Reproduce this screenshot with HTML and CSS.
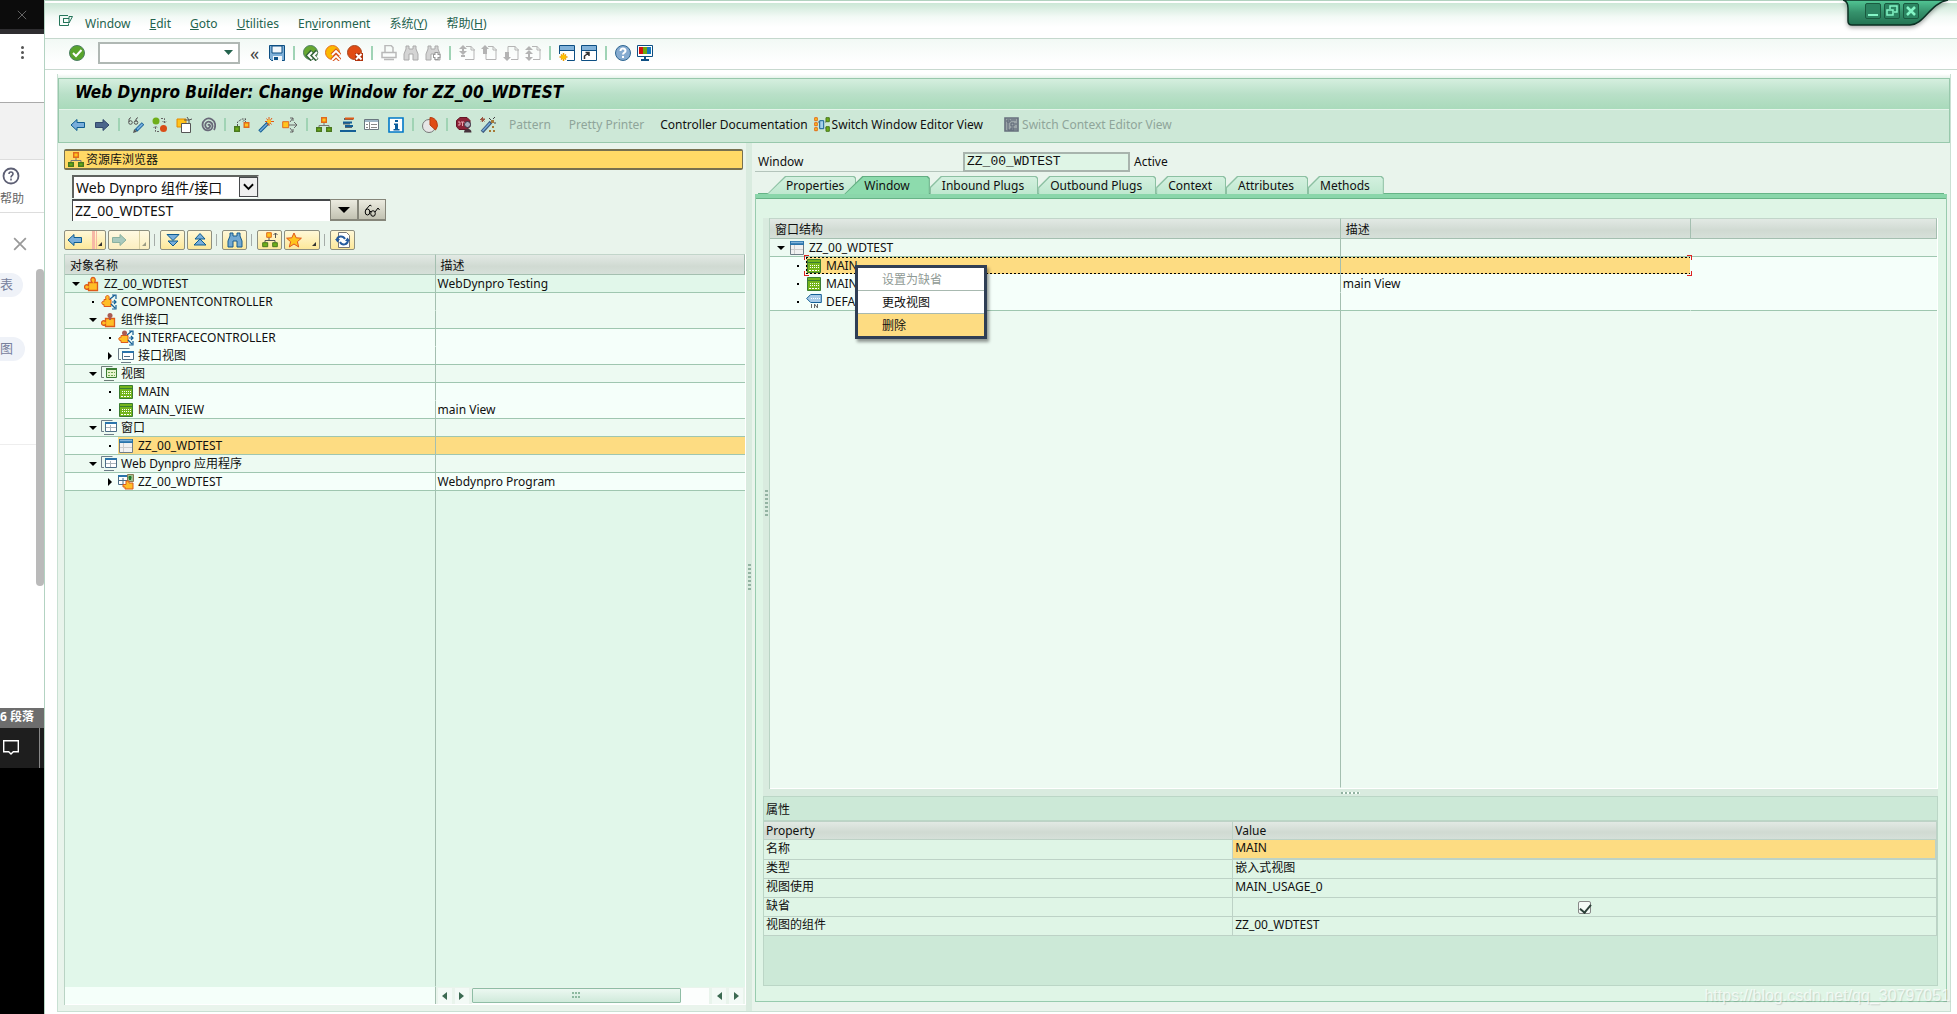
FILE: index.html
```html
<!DOCTYPE html>
<html lang="zh-CN">
<head>
<meta charset="utf-8">
<title>Web Dynpro Builder</title>
<link rel="stylesheet" href="styles.css">
</head>
<body>
<svg class="defs" aria-hidden="true">
  <symbol id="exit" viewBox="0 0 16 16"><path d="M10 2.500H1.500v10h9v-2M5 5.500h6M5 9.500h6M5.500 5v5M11 3.500h3.500L11 10z" fill="none" stroke="#24755a"/></symbol>
  <symbol id="ok" viewBox="0 0 16 16"><circle cx="8" cy="8" r="7.500" fill="#58a42c" stroke="#4d7f63"/><path d="M4 8l3 3 5.500-6" fill="none" stroke="#fff" stroke-width="2"/></symbol>
  <symbol id="save" viewBox="0 0 16 16"><path d="M.5.500h15v15h-13l-2-2z" fill="#7fb0d8" stroke="#0d4f83"/><path d="M3 1h10v7H3z" fill="#f2f7fb" stroke="#0d4f83"/><path d="M4 11h9v5H4z" fill="#f2f7fb"/><path d="M5 12h4v3H5z" fill="#0d4f83"/></symbol>
  <symbol id="back" viewBox="0 0 16 16"><circle cx="7.500" cy="7.500" r="7" fill="#66a830" stroke="#4d7f63"/><path d="M9 6l-4 4.500L9 15M14 6l-4 4.500 4 4.500" fill="none" stroke="#33633a" stroke-width="4"/><path d="M9 7l-3.500 3.500L9 14M14 7l-3.500 3.500L14 14" fill="none" stroke="#fff" stroke-width="2"/></symbol>
  <symbol id="up" viewBox="0 0 16 16"><circle cx="7.500" cy="7.500" r="7" fill="#fbb900" stroke="#e66f20"/><path d="M7 10l4-4 4 4M7 15l4-4 4 4" fill="none" stroke="#d9541e" stroke-width="4"/><path d="M7 10l4-4 4 4M7 15l4-4 4 4" fill="none" stroke="#fff" stroke-width="1.800"/></symbol>
  <symbol id="stop" viewBox="0 0 16 16"><circle cx="7.500" cy="7.500" r="7" fill="#e14b13" stroke="#a54a22"/><path d="M8 8h8v8H8z" fill="#b0320c"/><path d="M9 9l5.500 5.500M14.500 9L9 14.500" stroke="#fff" stroke-width="2"/></symbol>
  <symbol id="print" viewBox="0 0 16 16"><path d="M4 7V.5h6l2 2V7M1 7.500h14v5H1zM3 14.500h10" fill="none" stroke="#b9b9b9" stroke-width="1.500"/></symbol>
  <symbol id="find" viewBox="0 0 16 16"><path d="M3 1h3v3h4V1h3v3l2 5v6h-5V9H6v6H1V9l2-5z" fill="#d4d4d4" stroke="#aaa"/></symbol>
  <symbol id="bino" viewBox="0 0 16 16"><path d="M3 1h3v3h4V1h3v3l2 5v6h-5V9H6v6H1V9l2-5z" fill="#72a8d2" stroke="#155b8d"/></symbol>
  <symbol id="findn" viewBox="0 0 16 16"><path d="M3 1h3v3h4V1h3v3l2 5v6h-5V9H6v6H1V9l2-5z" fill="#d4d4d4" stroke="#aaa"/><path d="M11.500 7v8M8 11h7.500" stroke="#999" stroke-width="4"/><path d="M11.500 8v6M9 11h5.500" stroke="#fff" stroke-width="2"/></symbol>
  <symbol id="pgfirst" viewBox="0 0 16 16"><path d="M7 1.500h5l3 3v10H6M12 1v4h4" fill="none" stroke="#b5b5b5"/><path d="M4 0l4 4H5v2h3l-4 4-4-4h3V4H0zM2 10h4v2H2z" fill="#b3b3b3"/></symbol>
  <symbol id="pgup" viewBox="0 0 16 16"><path d="M7 1.500h5l3 3v10H5V9M12 1v4h4" fill="none" stroke="#b5b5b5"/><path d="M4 0l4 4H6v5H2V4H0z" fill="#b3b3b3"/></symbol>
  <symbol id="pgdn" viewBox="0 0 16 16"><path d="M5 8V1.500h7l3 3v10H8M12 1v4h4" fill="none" stroke="#b5b5b5"/><path d="M4 16l4-4H6V7H2v5H0z" fill="#b3b3b3"/></symbol>
  <symbol id="pglast" viewBox="0 0 16 16"><path d="M7 1.500h5l3 3v10H8M12 1v4h4" fill="none" stroke="#b5b5b5"/><path d="M4 1l4 4H0zM4 16l4-4H5V9h3L4 5 0 9h3v3H0z" fill="#b3b3b3"/></symbol>
  <symbol id="newwin" viewBox="0 0 16 16"><path d="M.5.500h15v15H8M.5 9V.500" fill="#fff" stroke="#0d4f83"/><path d="M1 1h14v4H1z" fill="#82b3da"/><path d="M.5 5.500h15" stroke="#0d4f83"/><path d="M4.500 8v8M.5 12h8M2 9.500l5 5M7 9.500l-5 5" stroke="#ee9a00" stroke-width="1.500"/><circle cx="4.500" cy="12" r="2.200" fill="#ffc400"/></symbol>
  <symbol id="shortcut" viewBox="0 0 16 16"><path d="M.5.500h15v15H.5z" fill="#fff" stroke="#0d4f83"/><path d="M1 1h14v4H1z" fill="#82b3da"/><path d="M.5 5.500h15" stroke="#0d4f83"/><path d="M3.500 14V11l4-3M4.500 7.500h3.500v3.500" fill="none" stroke="#333" stroke-width="1.500"/></symbol>
  <symbol id="help" viewBox="0 0 16 16"><circle cx="8" cy="8" r="7.500" fill="#86abd0" stroke="#2f6793"/><path d="M5.500 6c0-3.500 5-3 5 0 0 1.500-2.500 1.500-2.500 3.500M8 11v2" fill="none" stroke="#fff" stroke-width="2"/></symbol>
  <symbol id="monitor" viewBox="0 0 16 16"><path d="M.5.500h15v11H.5z" fill="#fff" stroke="#0d4f83"/><path d="M2 2h4v7H2z" fill="#d3120c"/><path d="M6 2h4v7H6z" fill="#6ea80c"/><path d="M10 2h4v7h-4z" fill="#1479bd"/><path d="M7 12h2v2h3v2H4v-2h3z" fill="#0d4f83"/></symbol>
  <symbol id="left" viewBox="0 0 16 16"><path d="M1 8l6-5.500v3h7.500v5H7v3z" fill="#78aedb" stroke="#0e5c91"/></symbol>
  <symbol id="leftgrey" viewBox="0 0 16 16"><path d="M15 8L9 2.500v3H1.500v5H9v3z" fill="#a9c9bd" stroke="#8ab1a0"/></symbol>
  <symbol id="right" viewBox="0 0 16 16"><path d="M15 8L9 2.500v3H1.500v5H9v3z" fill="#4a668b" stroke="#33486c"/></symbol>
  <symbol id="editgl" viewBox="0 0 16 16"><path d="M1 5V2l2-1.500M8 5V2l2-1.500" fill="none" stroke="#555"/><circle cx="2.500" cy="5.500" r="1.800" fill="none" stroke="#555"/><circle cx="8" cy="5.500" r="1.800" fill="none" stroke="#555"/><path d="M15 6.500L8 13.500" stroke="#145f96" stroke-width="3.500"/><path d="M14.500 7L9 12.500" stroke="#74aede" stroke-width="1.800"/><path d="M5 16l1.200-4 2.800 2.800z" fill="#555"/></symbol>
  <symbol id="swap" viewBox="0 0 16 16"><circle cx="4" cy="4" r="3.500" fill="#6eae18"/><circle cx="11.500" cy="11.500" r="3.500" fill="#d94d17"/><path d="M9 1.500h3.500V6M10.500 4l2 2 2-2M7 14.500H3.500V9M1.500 11l2-2 2 2" fill="none" stroke="#666" stroke-dasharray="2 1"/></symbol>
  <symbol id="copy" viewBox="0 0 16 16"><path d="M1 2h9v8H1z" fill="#ffc41d" stroke="#e48800"/><path d="M5.500 6.500h9v9h-9z" fill="#fff" stroke="#555"/><path d="M8 3h5v3M11 0l2 3 3-1" fill="none" stroke="#555"/></symbol>
  <symbol id="spiral" viewBox="0 0 16 16"><path d="M8 8.500c1-2 3 0 1.500 2C7 13 4 9 6 6c2.500-3 7-.5 6.500 3.500C12 14 5 15 3 10 1 4 7-.5 12 2.500c3.500 2 4 6.500 2 10.500" fill="none" stroke="#686878" stroke-width="1.800"/></symbol>
  <symbol id="branch" viewBox="0 0 16 16"><path d="M3.500 9V5L8 2h3.500v3M9 4.500l3-3" fill="none" stroke="#555" stroke-dasharray="2 1"/><path d="M.7 9.700h4.600v4.600H.7z" fill="#6eae18" stroke="#49781f" stroke-width="1.400"/><path d="M10.200 5.700h4.600v4.600h-4.600z" fill="#ffc41d" stroke="#e06a1c" stroke-width="1.400"/></symbol>
  <symbol id="wand" viewBox="0 0 16 16"><path d="M10 6l-8.500 8.500" stroke="#145f96" stroke-width="3.500"/><path d="M9 7l-7 7" stroke="#74aede" stroke-width="1.500"/><path d="M11 0v9M7 4.500h9M8.500 1.500l5 6M14 1L9 8" stroke="#e05b16"/><circle cx="11" cy="4.500" r="2" fill="#ffc41d"/></symbol>
  <symbol id="navi" viewBox="0 0 16 16"><path d="M.7 4.700h6v6h-6z" fill="#ffc41d" stroke="#e06a1c"/><path d="M7 8h8M12 5l3 3-3 3M8 5l3-4M8 1h3v3M8 11l3 4M8 15h3v-3" fill="none" stroke="#666"/></symbol>
  <symbol id="tree" viewBox="0 0 16 16"><path d="M8 5v4M3 11V8.500h10V11" fill="none" stroke="#777"/><path d="M5.700.7h4.600v4.600H5.700z" fill="#ffc41d" stroke="#e06a1c" stroke-width="1.400"/><path d="M.7 10.700h4.600v3.600H.7zM10.700 10.700h4.600v3.600h-4.600z" fill="#6eae18" stroke="#49781f" stroke-width="1.400"/></symbol>
  <symbol id="stack" viewBox="0 0 16 16"><path d="M4 2h9M3 6.500h7M5 10h7" stroke="#5e666c" stroke-width="2.200"/><path d="M5 1.500h9" stroke="#e05b16" stroke-width="2"/><path d="M3 5.500h9M5 9h8M0 14h16" stroke="#145f96" stroke-width="2"/></symbol>
  <symbol id="list" viewBox="0 0 16 16"><path d="M.5 2.500h14v10H.5z" fill="#fff" stroke="#6b7780"/><path d="M1 3h13v2H1z" fill="#9fb6c6"/><path d="M5.500 5v8M2 7.500h2M2 10.500h2M7 7.500h6M7 10.500h6" stroke="#888"/></symbol>
  <symbol id="info" viewBox="0 0 16 16"><path d="M1 1h14v14H1z" fill="#fff" stroke="#0078c8" stroke-width="1.600"/><path d="M7 3h3v2H7zM6 6.500h4V12h1.500v1.500h-6V12H7V8H6z" fill="#0c5d9c"/></symbol>
  <symbol id="pie" viewBox="0 0 16 16"><circle cx="7" cy="9" r="6.500" fill="#e6e6e6" stroke="#777"/><path d="M8 8V.5A7.500 7.500 0 0 1 13.500 13z" fill="#e04c15" stroke="#b73c10"/></symbol>
  <symbol id="stopuser" viewBox="0 0 16 16"><path d="M4 .500h7l3 3v6l-3 3H3l-2.500-3v-6z" fill="#8c2237" stroke="#651526"/><path d="M2 5h2v3H2M5 5h3M6.500 5v4M9 5v4" stroke="#e9a8b2" fill="none"/><circle cx="11.500" cy="7.500" r="3" fill="#aab" stroke="#334"/><path d="M8 15.500c0-5 7.500-5 7.500 0z" fill="#46323c"/></symbol>
  <symbol id="wand2" viewBox="0 0 16 16"><path d="M11 5l-9 10" stroke="#3f5c80" stroke-width="3.500"/><path d="M10 6l-7.500 8" stroke="#74aede" stroke-width="1.300"/><path d="M2.500 0v5M0 2.500h5M1 1l3.500 3.500M4.500 1L1 4.500" stroke="#9b5540"/><path d="M11 3h3v3h-3zM12 9h2v2h-2zM9 13h2v2H9zM13 13h2v2h-2z" fill="#a67a36"/><path d="M9 1l2 2M15 0l-2 2M14 6h2" stroke="#444"/></symbol>
  <symbol id="swin" viewBox="0 0 16 16"><path d="M.7.700h2.600v3H.7zM.7 5.700h2.600v3H.7zM.7 10.700h2.600v3H.7z" fill="#ffc41d" stroke="#e06a1c"/><path d="M5.700 3.700h4v8h-4z" fill="#a6d0ed" stroke="#145f96"/><path d="M12 .700h3.300v4H12zM12 9.700h3.300v4.600H12z" fill="#6eae18" stroke="#49781f"/><path d="M4 5h1M11 5h1M11 11h1" stroke="#666"/></symbol>
  <symbol id="sctx" viewBox="0 0 16 16"><path d="M1 1h13v13H1z" fill="#9ba5a8" stroke="#67707d" stroke-width="1.600"/><path d="M3 3h3v2H3zM7 6h3v3H7zM7 11h3v2H7zM4 5v8h3M7 3h5M11 7h2M11 12h2" fill="none" stroke="#5a6474"/></symbol>
  <symbol id="dblup" viewBox="0 0 16 16"><path d="M8 1.500L13 7H3zM8 7l6 6H2z" fill="#78aedb" stroke="#0e5c91"/></symbol>
  <symbol id="dbldn" viewBox="0 0 16 16"><path d="M8 14l5-5H3zM8 8.500l6-6H2z" fill="#78aedb" stroke="#0e5c91"/></symbol>
  <symbol id="treeup" viewBox="0 0 16 16"><path d="M7 5v4M3 11V8.500h10V11M13.500 6V1M11.500 3l2-2 2 2" fill="none" stroke="#555"/><path d="M4.700.7h4.600v4.600H4.700z" fill="#ffc41d" stroke="#e06a1c"/><path d="M.7 10.700h5v4h-5zM10.700 10.700h4.600v4h-4.600z" fill="#6eae18" stroke="#49781f"/></symbol>
  <symbol id="star" viewBox="0 0 16 16"><path d="M8 1l2.200 4.800 5.200.4-4 3.500 1.300 5.300L8 12l-4.700 3 1.300-5.300-4-3.500 5.200-.4z" fill="#ffc41d" stroke="#e0561c"/></symbol>
  <symbol id="refresh" viewBox="0 0 16 16"><path d="M3.500.500h8l3 3v12h-11z" fill="#fff" stroke="#777"/><path d="M2 8c0-4 6-5 8-1M13 8c0 5-6 6-8 2" fill="none" stroke="#255b9f" stroke-width="2"/><path d="M0 7h5l-2.500 3.500zM15 9h-5l2.500-3.500z" fill="#255b9f"/></symbol>
  <symbol id="glasses" viewBox="0 0 16 16"><ellipse cx="3.500" cy="10" rx="2.300" ry="3" fill="none" stroke="#000"/><ellipse cx="9" cy="11.500" rx="2.300" ry="2.800" fill="none" stroke="#000"/><path d="M2 7.500l4-4.500 1.500 1M6 9.500h1.500M11 10l3-4 1.500 2" fill="none" stroke="#000"/></symbol>
  <symbol id="puzzle" viewBox="0 0 16 16"><path d="M4.500 14.500v-2C3 14 .5 13 .5 11S3 8 4.500 9.500v-3H8C6 4 7 1.500 9 1.500S12 4 10.500 6.500h3v8z" fill="#ffbe26" stroke="#dd5b1a" stroke-width="1.300"/></symbol>
  <symbol id="puzzle2" viewBox="0 0 16 16"><path d="M4.500 14.500v-2C3 14 .5 13 .5 11S3 8 4.500 9.500v-3h9v8z" fill="#ffbe26" stroke="#dd5b1a" stroke-width="1.300"/><circle cx="9" cy="3.500" r="2.500" fill="#a95b52"/><path d="M8 5h2v3H8z" fill="#a95b52"/></symbol>
  <symbol id="pctrl" viewBox="0 0 16 16"><path d="M3 12.500v-2C1 11 .5 9 1 8s1.500-.5 2-.5v-2h2C4 3 5 1.500 6.500 1.500S8.500 3 8 5.500h2v7z" fill="#ffbe26" stroke="#dd5b1a"/><path d="M9 5l5-4M11 1h4v4M11 8h4M13 6l2 2-2 2M10 10l4 4M15 11v4h-4" fill="none" stroke="#145f96" stroke-width="1.200"/></symbol>
  <symbol id="pctrl2" viewBox="0 0 16 16"><path d="M3 12.500v-2C1 11 .5 9 1 8s1.500-.5 2-.5v-2h7v7z" fill="#ffbe26" stroke="#dd5b1a"/><circle cx="6.500" cy="3" r="2.500" fill="#a95b52"/><path d="M9 5l5-4M11 1h4v4M11 8h4M13 6l2 2-2 2M10 10l4 4M15 11v4h-4" fill="none" stroke="#145f96" stroke-width="1.200"/></symbol>
  <symbol id="wins" viewBox="0 0 16 16"><path d="M3 11.500H.5v-11h11M3 14.500h10" fill="none" stroke="#6d7d88"/><path d="M4.500 3.500h11v8h-11z" fill="#fff" stroke="#4c6d86"/><path d="M4 3h12v2H4z" fill="#2a74ab"/><path d="M6 8.500h6" stroke="#4c6d86"/></symbol>
  <symbol id="winsg" viewBox="0 0 16 16"><path d="M3 11.500H.5v-11h11M3 14.500h10" fill="none" stroke="#6d7d78"/><path d="M5.500 2.500h10v9h-10z" fill="#e5f3cf" stroke="#3a7d33"/><path d="M5 2h11v2H5z" fill="#3a7d33"/><path d="M7 6.500h7M7 9.500h7" stroke="#70a850" stroke-dasharray="2 1"/></symbol>
  <symbol id="winst" viewBox="0 0 16 16"><path d="M3 11.500H.5v-11h11M3 14.500h10" fill="none" stroke="#6d7d88"/><path d="M4.500 2.500h11v9h-11z" fill="#fff" stroke="#4c6d86"/><path d="M5 7.500h10M9.500 5v6" stroke="#a9b4bb"/><path d="M4 2h12v2H4z" fill="#2a74ab"/></symbol>
  <symbol id="view" viewBox="0 0 16 16"><path d="M1.500 1.500h13v13h-13z" fill="#74b51c" stroke="#3a7d33"/><path d="M2 4.500h12" stroke="#3a7d33"/><path d="M4 7.500h9M4 9.500h9" stroke="#fff" stroke-dasharray="1 1"/><path d="M3 12.500h10" stroke="#fff" stroke-dasharray="2 1"/></symbol>
  <symbol id="win" viewBox="0 0 16 16"><path d="M1.500 1.500h13v13h-13z" fill="#f1f1f1" stroke="#6f7d86"/><path d="M1 1h14v4H1z" fill="#2a74ab"/><path d="M2 2.500h12" stroke="#82b3da" stroke-width="1.500"/><path d="M5.500 5v9M2 9.500h12" stroke="#ccc"/></symbol>
  <symbol id="app" viewBox="0 0 16 16"><path d="M.5 1.500h9v9h-9zM1 6.500h9M5 4v7" fill="#fff" stroke="#4c6d86"/><path d="M0 1h10v2H0z" fill="#2a74ab"/><path d="M9.500.500h6v7h-6z" fill="#9fc08f" stroke="#8a7a55"/><path d="M12 2v4M10.500 3.500h3" stroke="#1d7a2c" stroke-width="2"/><path d="M7 15v-2H5v-2.500h3V7h3v2h4v6z" fill="#ffbe26" stroke="#dd5b1a"/></symbol>
  <symbol id="plug" viewBox="0 0 16 16"><path d="M.7 4.500l4-4h10.600v8H4.700z" fill="#a9cbe8" stroke="#145f96"/><path d="M5 4.500h9" stroke="#fff" stroke-dasharray="1 1"/><path d="M5.500 10v4M8.500 14v-4l3 4v-4" fill="none" stroke="#666"/></symbol>
</svg>

<div class="screen">
  <aside class="strip">
    <div class="strip-top"><svg viewBox="0 0 12 12"><path d="M1 1l10 10M11 1L1 11" stroke="#777" fill="none"/></svg></div>
    <div class="strip-menu"><span></span><span></span><span></span></div>
    <div class="strip-avatar"></div>
    <div class="strip-help">
      <svg viewBox="0 0 18 18"><circle cx="9" cy="9" r="7.500" fill="none" stroke="#5d5f74" stroke-width="1.800"/><path d="M7 7c0-3 4-2.500 4 0 0 1.500-2 1.300-2 3.500M9 11.500v2" fill="none" stroke="#5d5f74" stroke-width="1.600"/></svg>
      <span>帮助</span>
    </div>
    <div class="strip-body">
      <svg class="close" viewBox="0 0 12 12"><path d="M1 1l10 10M11 1L1 11" stroke="#999" stroke-width="1.500" fill="none"/></svg>
      <span class="pill">表</span>
      <span class="pill second">图</span>
      <i class="thumb"></i>
    </div>
    <div class="strip-count">6 段落</div>
    <div class="strip-note"><svg viewBox="0 0 16 16"><path d="M.7 1.700h14.600v11h-5L8 15l-2.300-2.300h-5z" fill="none" stroke="#fff" stroke-width="1.400"/></svg></div>
    <div class="strip-rest"></div>
  </aside>

  <main class="app">
    <nav class="menubar">
      <svg class="ic"><use href="#exit"/></svg>
      <a href="#">Window</a><a href="#"><u>E</u>dit</a><a href="#"><u>G</u>oto</a><a href="#"><u>U</u>tilities</a><a href="#">En<u>v</u>ironment</a><a href="#">系统(<u>Y</u>)</a><a href="#">帮助(<u>H</u>)</a>
    </nav>
    <div class="stdbar">
      <button class="tb" aria-label="Enter"><svg class="ic"><use href="#ok"/></svg></button>
      <label class="command"><input type="text" aria-label="Command"><svg viewBox="0 0 9 5"><path d="M0 0h9L4.500 5z" fill="#24634e"/></svg></label>
      <span class="chev">«</span>
      <button class="tb" aria-label="Save"><svg class="ic"><use href="#save"/></svg></button>
      <i class="sep"></i>
      <button class="tb" aria-label="Back"><svg class="ic"><use href="#back"/></svg></button>
      <button class="tb" aria-label="Exit"><svg class="ic"><use href="#up"/></svg></button>
      <button class="tb" aria-label="Cancel"><svg class="ic"><use href="#stop"/></svg></button>
      <i class="sep"></i>
      <button class="tb" aria-label="Print"><svg class="ic"><use href="#print"/></svg></button>
      <button class="tb" aria-label="Find"><svg class="ic"><use href="#find"/></svg></button>
      <button class="tb" aria-label="Find next"><svg class="ic"><use href="#findn"/></svg></button>
      <i class="sep"></i>
      <button class="tb" aria-label="First page"><svg class="ic"><use href="#pgfirst"/></svg></button>
      <button class="tb" aria-label="Previous page"><svg class="ic"><use href="#pgup"/></svg></button>
      <button class="tb" aria-label="Next page"><svg class="ic"><use href="#pgdn"/></svg></button>
      <button class="tb" aria-label="Last page"><svg class="ic"><use href="#pglast"/></svg></button>
      <i class="sep"></i>
      <button class="tb" aria-label="New session"><svg class="ic"><use href="#newwin"/></svg></button>
      <button class="tb" aria-label="Create shortcut"><svg class="ic"><use href="#shortcut"/></svg></button>
      <i class="sep"></i>
      <button class="tb" aria-label="Help"><svg class="ic"><use href="#help"/></svg></button>
      <button class="tb" aria-label="Layout"><svg class="ic"><use href="#monitor"/></svg></button>
    </div>

    <div class="frame">
      <h1>Web Dynpro Builder: Change Window for ZZ_00_WDTEST</h1>
      <div class="appbar">
        <button class="tb" aria-label="Previous object"><svg class="ic"><use href="#left"/></svg></button>
        <button class="tb" aria-label="Next object"><svg class="ic"><use href="#right"/></svg></button>
        <i class="sep"></i>
        <button class="tb" aria-label="Display or change"><svg class="ic"><use href="#editgl"/></svg></button>
        <button class="tb" aria-label="Active or inactive"><svg class="ic"><use href="#swap"/></svg></button>
        <button class="tb" aria-label="Other object"><svg class="ic"><use href="#copy"/></svg></button>
        <button class="tb" aria-label="Enhance"><svg class="ic"><use href="#spiral"/></svg></button>
        <i class="sep"></i>
        <button class="tb" aria-label="Check"><svg class="ic"><use href="#branch"/></svg></button>
        <button class="tb" aria-label="Activate"><svg class="ic"><use href="#wand"/></svg></button>
        <button class="tb" aria-label="Where-used list"><svg class="ic"><use href="#navi"/></svg></button>
        <i class="sep"></i>
        <button class="tb" aria-label="Object list"><svg class="ic"><use href="#tree"/></svg></button>
        <button class="tb" aria-label="Navigation stack"><svg class="ic"><use href="#stack"/></svg></button>
        <button class="tb" aria-label="Full screen"><svg class="ic"><use href="#list"/></svg></button>
        <button class="tb" aria-label="Information"><svg class="ic"><use href="#info"/></svg></button>
        <i class="sep"></i>
        <button class="tb" aria-label="Runtime analysis"><svg class="ic"><use href="#pie"/></svg></button>
        <i class="sep"></i>
        <button class="tb" aria-label="Breakpoint"><svg class="ic"><use href="#stopuser"/></svg></button>
        <button class="tb" aria-label="Wizard"><svg class="ic"><use href="#wand2"/></svg></button>
        <button class="tx" disabled>Pattern</button>
        <button class="tx" disabled>Pretty Printer</button>
        <button class="tx doc">Controller Documentation</button>
        <button class="tx wide"><svg class="ic"><use href="#swin"/></svg>Switch Window Editor View</button>
        <button class="tx wide" disabled><svg class="ic"><use href="#sctx"/></svg>Switch Context Editor View</button>
      </div>

      <div class="work">
        <section class="left">
          <button class="browser"><svg class="ic"><use href="#tree"/></svg>资源库浏览器</button>
          <div class="pick">
            <span class="combo"><select aria-label="Object type"><option>Web Dynpro 组件/接口</option></select><svg viewBox="0 0 12 8"><path d="M1 1l5 5 5-5" fill="none" stroke="#000" stroke-width="2"/></svg></span>
            <div class="objrow"><input type="text" aria-label="Object name" value="ZZ_00_WDTEST"><button class="bevel" aria-label="History"><svg viewBox="0 0 12 6" width="12" height="6"><path d="M0 0h12L6 6z"/></svg></button><button class="bevel" aria-label="Display"><svg class="ic"><use href="#glasses"/></svg></button></div>
          </div>
          <div class="treebar">
            <button class="yb split" aria-label="Back"><svg class="ic"><use href="#left"/></svg></button>
            <button class="yb split off" aria-label="Forward"><svg class="ic"><use href="#leftgrey"/></svg></button>
            <i class="sep"></i>
            <button class="yb" aria-label="Expand"><svg class="ic"><use href="#dbldn"/></svg></button>
            <button class="yb" aria-label="Collapse"><svg class="ic"><use href="#dblup"/></svg></button>
            <i class="sep"></i>
            <button class="yb" aria-label="Find"><svg class="ic"><use href="#bino"/></svg></button>
            <i class="sep"></i>
            <button class="yb" aria-label="Higher level"><svg class="ic"><use href="#treeup"/></svg></button>
            <button class="yb fav" aria-label="Favorites"><svg class="ic"><use href="#star"/></svg></button>
            <i class="sep"></i>
            <button class="yb" aria-label="Refresh"><svg class="ic"><use href="#refresh"/></svg></button>
          </div>
          <div class="treebox">
            <table class="tree objects">
              <colgroup><col class="c-name"><col></colgroup>
              <thead><tr><th>对象名称</th><th>描述</th></tr></thead>
              <tbody>
                <tr class="l0 end"><td><div class="node d0"><i class="open"></i><svg class="ic"><use href="#puzzle"/></svg>ZZ_00_WDTEST</div></td><td>WebDynpro Testing</td></tr>
                <tr class="l1"><td><div class="node d1"><i class="dot"></i><svg class="ic"><use href="#pctrl"/></svg>COMPONENTCONTROLLER</div></td><td></td></tr>
                <tr class="l1 end"><td><div class="node d1"><i class="open"></i><svg class="ic"><use href="#puzzle2"/></svg>组件接口</div></td><td></td></tr>
                <tr class="l2"><td><div class="node d2"><i class="dot"></i><svg class="ic"><use href="#pctrl2"/></svg>INTERFACECONTROLLER</div></td><td></td></tr>
                <tr class="l2 end"><td><div class="node d2"><i class="shut"></i><svg class="ic"><use href="#wins"/></svg>接口视图</div></td><td></td></tr>
                <tr class="l1 end"><td><div class="node d1"><i class="open"></i><svg class="ic"><use href="#winsg"/></svg>视图</div></td><td></td></tr>
                <tr class="l2"><td><div class="node d2"><i class="dot"></i><svg class="ic"><use href="#view"/></svg>MAIN</div></td><td></td></tr>
                <tr class="l2 end"><td><div class="node d2"><i class="dot"></i><svg class="ic"><use href="#view"/></svg>MAIN_VIEW</div></td><td>main View</td></tr>
                <tr class="l1 end"><td><div class="node d1"><i class="open"></i><svg class="ic"><use href="#winst"/></svg>窗口</div></td><td></td></tr>
                <tr class="l2 end sel"><td><div class="node d2"><i class="dot"></i><span class="hl"><svg class="ic"><use href="#win"/></svg>ZZ_00_WDTEST</span></div></td><td></td></tr>
                <tr class="l1 end"><td><div class="node d1"><i class="open"></i><svg class="ic"><use href="#winst"/></svg>Web Dynpro 应用程序</div></td><td></td></tr>
                <tr class="l2 end"><td><div class="node d2"><i class="shut"></i><svg class="ic"><use href="#app"/></svg>ZZ_00_WDTEST</div></td><td>Webdynpro Program</td></tr>
                <tr class="fill"><td></td><td></td></tr>
                <tr class="scrollrow"><td></td><td><div class="hscroll"><b class="al"></b><b class="ar"></b><span class="track"><span class="grip"><i></i></span></span><b class="al"></b><b class="ar"></b></div></td></tr>
              </tbody>
            </table>
          </div>
        </section>

        <div class="vsplit"><i></i></div>

        <section class="right">
          <div class="objhead">
            <label for="win-name">Window</label><input id="win-name" type="text" value="ZZ_00_WDTEST" readonly><span>Active</span>
          </div>
          <div class="tabs">
            <button class="tab first"><span>Properties</span></button><button class="tab on"><span>Window</span></button><button class="tab"><span>Inbound Plugs</span></button><button class="tab"><span>Outbound Plugs</span></button><button class="tab"><span>Context</span></button><button class="tab"><span>Attributes</span></button><button class="tab"><span>Methods</span></button>
          </div>
          <div class="pane">
            <div class="upper">
              <div class="vsplit inner"><i></i></div>
              <div class="treebox">
                <table class="tree structure">
                  <colgroup><col class="c-struct"><col class="c-desc"><col></colgroup>
                  <thead><tr><th>窗口结构</th><th>描述</th><th></th></tr></thead>
                  <tbody>
                    <tr class="l1 end"><td><div class="node d0"><i class="open"></i><svg class="ic"><use href="#win"/></svg>ZZ_00_WDTEST</div></td><td></td><td></td></tr>
                    <tr class="l2 focus"><td><div class="node d1"><i class="dot"></i><span class="hl"><svg class="ic"><use href="#view"/></svg>MAIN</span></div></td><td class="lit"></td><td></td></tr>
                    <tr class="l2"><td><div class="node d1"><i class="dot"></i><svg class="ic"><use href="#view"/></svg>MAIN_VIEW</div></td><td>main View</td><td></td></tr>
                    <tr class="l2 end"><td><div class="node d1"><i class="dot"></i><svg class="ic"><use href="#plug"/></svg>DEFAULT</div></td><td></td><td></td></tr>
                    <tr class="fill"><td></td><td></td><td></td></tr>
                  </tbody>
                </table>
                <div class="ctx" role="menu">
                  <button role="menuitem" disabled>设置为缺省</button>
                  <button role="menuitem">更改视图</button>
                  <button role="menuitem" class="hot">删除</button>
                </div>
              </div>
            </div>
            <div class="hsplit"><i></i></div>
            <div class="props">
              <h2>属性</h2>
              <table>
                <colgroup><col class="c-prop"><col></colgroup>
                <thead><tr><th>Property</th><th>Value</th></tr></thead>
                <tbody>
                  <tr class="hotrow"><td>名称</td><td>MAIN</td></tr>
                  <tr><td>类型</td><td>嵌入式视图</td></tr>
                  <tr><td>视图使用</td><td>MAIN_USAGE_0</td></tr>
                  <tr><td><label for="def">缺省</label></td><td class="mid"><input id="def" type="checkbox" checked></td></tr>
                  <tr><td>视图的组件</td><td>ZZ_00_WDTEST</td></tr>
                </tbody>
              </table>
            </div>
          </div>
        </section>
      </div>
    </div>

    <div class="winctl">
      <svg class="shape" viewBox="0 0 106 30"><defs><linearGradient id="wg" x2="0" y2="1"><stop offset="0" stop-color="#52c795"/><stop offset=".5" stop-color="#35916b"/><stop offset="1" stop-color="#237252"/></linearGradient></defs><path d="M0 0c4 1 5 4 5 8v13q0 4 4 4h58c14 0 20-22 38-25z" fill="url(#wg)" stroke="#0b3023" stroke-width="1.500"/></svg>
      <button aria-label="Minimize"><svg viewBox="0 0 14 14"><path d="M2 11h10" stroke="#84f5c6" stroke-width="2"/></svg></button>
      <button aria-label="Restore"><svg viewBox="0 0 14 14"><path d="M5 5V2h7v6H9M2 6h6v5H2z" fill="none" stroke="#84f5c6" stroke-width="1.500"/></svg></button>
      <button aria-label="Close"><svg viewBox="0 0 14 14"><path d="M3 3l8 8M11 3l-8 8" stroke="#84f5c6" stroke-width="2.500"/></svg></button>
    </div>
    <span class="mark">https://blog.csdn.net/qq_30797051</span>
  </main>
</div>
</body>
</html>
```
FILE: styles.css
```css
* { box-sizing: border-box; }
body { margin: 0; font: 12px/16px "Noto Sans", "Noto Sans CJK SC", sans-serif; color: #101010; background: #fff; }
button, input, select { font: inherit; color: inherit; margin: 0; padding: 0; border: 0; background: none; border-radius: 0; }
button { display: flex; align-items: center; justify-content: center; white-space: nowrap; }
a { color: inherit; text-decoration: none; }
h1, h2 { margin: 0; }
svg { display: block; flex: none; }
.defs { position: absolute; width: 0; height: 0; }
.ic { width: 16px; height: 16px; }
.screen { display: flex; min-height: 100vh; }

/* page visible behind the application window */
.strip { flex: none; width: 45px; display: flex; flex-direction: column; border-right: 1px solid #b3d3c2; overflow: hidden; }
.strip-top { height: 34px; background: #0c0c0c; border-bottom: 5px solid #2e2d30; display: flex; justify-content: center; align-items: center; }
.strip-top svg { width: 10px; height: 10px; }
.strip-menu { height: 69px; border-bottom: 1px solid #aaa; display: flex; flex-direction: column; align-items: center; gap: 2px; padding-top: 12px; }
.strip-menu span { width: 3px; height: 3px; border-radius: 50%; background: #555; }
.strip-avatar { height: 57px; background: #f2f2f2; border-bottom: 1px solid #ddd; }
.strip-help { height: 53px; border-bottom: 1px solid #ddd; padding-top: 7px; color: #666; display: flex; flex-direction: column; gap: 6px; }
.strip-help svg { width: 18px; height: 18px; margin-left: 2px; }
.strip-body { position: relative; flex: 1; min-height: 300px; background: linear-gradient(#eee, #eee) 0 231px / 36px 1px no-repeat #fff; }
.strip-body .close { width: 14px; height: 14px; margin: 24px 0 22px 13px; }
.pill { display: block; width: 23px; height: 24px; border-radius: 0 12px 12px 0; background: #eff2f8; color: #77809c; font-size: 13px; line-height: 22px; }
.pill.second { width: 25px; margin-top: 40px; }
.thumb { position: absolute; right: 0; top: 56px; width: 8px; height: 317px; border-radius: 4px; background: #bababa; }
.strip-count { height: 20px; background: #6d6d6d; color: #fff; font-weight: bold; line-height: 18px; white-space: nowrap; }
.strip-note { height: 40px; background: linear-gradient(#888, #888) 39px 0 / 1px 100% no-repeat #1e1e1e; padding: 11px 3px; }
.strip-note svg { width: 16px; height: 16px; }
.strip-rest { height: 246px; background: #000; }

.app { position: relative; flex: 1; min-width: 0; display: flex; flex-direction: column; }
.menubar { height: 39px; display: flex; align-items: center; gap: 19px; padding: 8px 13px 0; color: #24634e; border-bottom: 1px solid #c5d8cd; border-top: 1px solid #b2d2c0; background: linear-gradient(#fff 0 2px, #cbe7d6 2px, #f3faf6 16px, #fff 26px); }
.menubar .ic { margin: -6px -8px 0 0; }
.stdbar { height: 31px; display: flex; align-items: center; gap: 6px; padding: 0 24px 2px; border-bottom: 1px solid #c8d9cf; background: linear-gradient(#f2f9f5, #fff 80%); }
.stdbar .sep { width: 6px; height: 14px; background: linear-gradient(#9fd3b5, #9fd3b5) 2px 0 / 2px 100% no-repeat; }
.command { position: relative; width: 142px; height: 22px; margin: 0 4px 0 7px; }
.command input { width: 100%; height: 100%; border: 2px solid #b0b8b4; background: #fff; padding: 0 18px 0 4px; }
.command svg { position: absolute; right: 7px; top: 8px; width: 9px; height: 5px; }
.chev { width: 10px; margin-right: 3px; font-size: 18px; color: #444; }

.frame { flex: 1; margin: 4px 6px 2px 12px; border: solid #c9e0d3; border-width: 0 1px 1px; background: linear-gradient(#fff, #e6f2ea 4px) top / 100% 5px no-repeat #e9f4ec; padding-top: 4px; display: flex; flex-direction: column; }
h1 { height: 31px; padding: 1px 16px; font: italic bold 17px/24px "DejaVu Sans Condensed", "DejaVu Sans", sans-serif; color: #000; border: 1px solid #98c8ac; border-bottom: 0; background: linear-gradient(#d5efdf, #b9e0c8 50%, #a9dabb); }
.appbar { height: 34px; display: flex; align-items: center; gap: 8px; padding: 0 11px 2px; border: solid #98c8ac; border-width: 0 1px 1px; background: #cde8d7; box-shadow: inset 0 1px #e4f4ea; }
.appbar .sep { width: 2px; height: 13px; background: #a0d3b4; }
.tx { margin-left: 5px; margin-right: 5px; color: #101010; }
.tx.doc { margin-left: 3px; margin-right: 0; }
.tx.wide { gap: 2px; margin-left: -2px; margin-right: 15px; }
.tx:disabled { color: #8fa59a; }

.work { flex: 1; display: grid; grid-template-columns: 688fr 6px 1198fr; min-height: 0; }
.left { display: flex; flex-direction: column; padding: 6px 0 6px 6px; min-width: 0; }
.browser { height: 21px; margin-right: 3px; justify-content: flex-start; padding: 0 3px; gap: 2px; background: #ffd966; border: 2px solid #77704f; border-width: 2px 1px; border-radius: 2px; }
.pick { padding: 5px 8px 8px; }
.combo { position: relative; display: block; width: 187px; height: 23px; font-size: 14px; }
.combo select { appearance: none; width: 100%; height: 100%; padding: 0 2px; background: #fff; border: 2px solid #5f635f; border-right-color: #ddd; border-bottom: 0; }
.combo svg { position: absolute; right: 1px; top: 2px; width: 19px; height: 20px; padding: 4px 3px; border: 1px solid #46494b; background: #efefef; pointer-events: none; }
.objrow { display: flex; height: 22px; margin-top: 1px; font-size: 14px; }
.objrow input { width: 258px; padding: 0 2px; background: #fff; border: solid #46494b; border-width: 2px 0 0 1px; }
.bevel { width: 28px; border: solid #86867a; border-width: 1px 1px 2px; background: linear-gradient(#ecebe0, #c2c2b2); }
.treebar { display: flex; align-items: center; gap: 2px; height: 22px; margin-bottom: 3px; }
.treebar .sep { width: 6px; height: 12px; background: linear-gradient(#a5aca8, #a5aca8) 2px 0 / 1px 100% no-repeat; }
.yb { position: relative; width: 25px; height: 20px; border: 1px solid #8d8f80; border-radius: 2px; background: linear-gradient(#fff8d8, #fde89a); }
.yb.split { width: 42px; justify-content: flex-start; padding-left: 2px; background: linear-gradient(90deg, transparent 27px, #f7b7a5 27px 30px, transparent 30px 31px, #f7b7a5 31px 32px, transparent 32px), linear-gradient(#fff8d8, #fde89a); }
.yb.split.off { background: linear-gradient(90deg, transparent 30px, #d8cfa0 30px 31px, transparent 31px), linear-gradient(#fff9e2, #fbeec0); }
.yb.fav { width: 36px; justify-content: flex-start; padding-left: 1px; }
.yb.split::after, .yb.fav::after { content: ""; position: absolute; right: 3px; bottom: 3px; border: solid transparent; border-width: 0 0 4px 4px; border-bottom-color: #333; }
.yb.off::after { border-bottom-color: #9b9b85; }

.treebox { position: relative; flex: 1; display: grid; min-height: 0; border-left: 1px solid #b9d3c4; }
table { width: 100%; table-layout: fixed; border-collapse: separate; border-spacing: 0; }
.tree { height: 100%; border-right: 1px solid #fff; border-bottom: 1px solid #fff; }
.objects { background: #e1f7ea; }
.structure { background: #edfaf2; }
.c-name { width: 54.500%; }
.c-struct { width: 48.900%; }
.c-desc { width: 30%; }
.c-prop { width: 40%; }
th { text-align: left; font-weight: normal; background: linear-gradient(#e2e9e4, #d0dad2 60%, #d6e0d9); }
.tree th { height: 20px; padding: 2px 5px 0; line-height: 17px; border: 1px solid #a4bfb0; border-left: 0; border-top-color: #c2d5ca; }
.tree td { height: 18px; padding: 0 2px; line-height: 17px; border-right: 1px solid #a4bfb0; border-bottom: 1px solid transparent; white-space: nowrap; }
.tree td:last-child { border-right: 0; }
.tree td:first-child { padding: 0; }
.tree .fill td { height: auto; }
.l1 { background: #edfaf2; }
.l2 { background: #f5fffa; }
.tree .end td { border-bottom-color: #9fc6b0; }
.node { display: flex; align-items: center; height: 17px; gap: 4px; }
.d0 { padding-left: 7px; }
.d1 { padding-left: 24px; }
.d2 { padding-left: 41px; }
.open, .shut, .dot { flex: none; width: 8px; height: 8px; }
.open { border: solid transparent; border-width: 4px 4px 0; border-top-color: #000; height: 4px; }
.shut { border: solid transparent; border-width: 4px 0 4px 4px; border-left-color: #000; margin-left: 2px; width: 6px; }
.dot { background: linear-gradient(#000, #000) center / 2px 2px no-repeat; }
.hl { position: relative; flex: 1; display: flex; align-items: center; align-self: stretch; gap: 4px; background: #fddc82; }
.sel td:last-child, .lit { background: #fddc82; }
.focus .hl { outline: 0; background: repeating-linear-gradient(90deg, #000 0 2px, transparent 2px 4px) top / 100% 1px no-repeat, repeating-linear-gradient(90deg, #000 0 2px, transparent 2px 4px) bottom / 100% 1px no-repeat, repeating-linear-gradient(#000 0 2px, transparent 2px 4px) left / 1px 100% no-repeat, #fddc82; }
.tree .lit { position: relative; border-right-color: transparent; background: repeating-linear-gradient(90deg, #000 0 2px, transparent 2px 4px) 0 0 / 100% 1px no-repeat, repeating-linear-gradient(90deg, #000 0 2px, transparent 2px 4px) 0 100% / 100% 1px no-repeat, #fddc82; background-clip: padding-box; }
.focus .hl::before, .lit::after { content: ""; position: absolute; top: -2px; bottom: -2px; width: 5px; background: linear-gradient(#d22, #d22) 0 0 / 100% 1px no-repeat, linear-gradient(#d22, #d22) 0 100% / 100% 1px no-repeat, linear-gradient(#d22, #d22) var(--edge) 0 / 1px 5px no-repeat, linear-gradient(#d22, #d22) var(--edge) 100% / 1px 5px no-repeat; }
.focus .hl::before { left: -2px; --edge: 0; }
.lit::after { right: -2px; --edge: 100%; }
.structure .fill td:nth-child(2), .structure .l1 td:nth-child(2), .structure .l2 td:nth-child(2) { border-right-color: transparent; }
.tree .scrollrow td { height: 17px; background: #e9f4ec; padding: 0 0 0 2px; border-bottom: 0; }
.tree .scrollrow td:first-child { background: #f5fffa; }
.hscroll { display: flex; gap: 3px; height: 16px; padding-right: 2px; }
.hscroll b { width: 14px; background: #f3faf6; display: grid; place-items: center; }
.al::before { content: ""; border: solid transparent; border-width: 4px 5px 4px 0; border-right-color: #3c6a52; }
.ar::before { content: ""; border: solid transparent; border-width: 4px 0 4px 5px; border-left-color: #3c6a52; }
.track { flex: 1; background: #fcfefd; }
.grip { display: grid; place-items: center; width: 88%; height: 15px; border: 1px solid #8fbda5; border-radius: 1px; background: linear-gradient(#ecf8f1, #d0eadb); }
.grip i { width: 8px; height: 6px; background: linear-gradient(transparent 2px, #dcf0e4 2px 4px, transparent 4px), repeating-linear-gradient(90deg, #8db9a0 0 2px, transparent 2px 3px); }

.vsplit { background: #d9ebdf; display: grid; place-items: center; }
.vsplit i { width: 3px; height: 27px; background: repeating-linear-gradient(#93b3a2 0 2px, transparent 2px 4px); }
.right { display: flex; flex-direction: column; padding: 8px 3px 9px; min-width: 0; }
.objhead { display: flex; height: 21px; align-items: center; margin-bottom: 4px; }
.objhead label { width: 208px; height: 21px; padding: 3px 3px 0; border-bottom: 1px solid #b4c4bb; }
.objhead input { width: 167px; height: 20px; padding: 0 2px; border: 2px solid #a8b4ad; background: #dff5e6; font: 13px/16px "Liberation Mono", monospace; margin-right: 4px; }
.tabs { display: flex; height: 18px; padding-left: 12px; }
.tab { position: relative; height: 18px; padding: 1px 14px 0 12px; }
.tab::before, .tab::after { content: ""; position: absolute; inset: 0; background: #8cc0a2; clip-path: polygon(11px 0, calc(100% - 2px) 0, 100% 2px, 100% 100%, 0 100%, 0 11px); }
.tab::after { inset: 1px 1px 0; background: linear-gradient(#d3f0df, #bfe8cf); }
.tab.first, .tab.on { padding-left: 19px; }
.tab.first { padding-right: 12px; }
.tab.on { margin-left: -12px; padding: 1px 20px 0; }
.tab.first::before, .tab.first::after, .tab.on::before, .tab.on::after { clip-path: polygon(18px 0, calc(100% - 2px) 0, 100% 2px, 100% 100%, 0 100%); }
.tab.on::before { background: #62ae82; }
.tab.on::after { background: #8ddbad; }
.tab span { position: relative; z-index: 1; }
.pane { flex: 1; display: flex; flex-direction: column; border: 1px solid #98cbae; border-top: 4px solid #8ad6aa; box-shadow: inset 0 1px #67b487, 0 -4px 0 -3px #67b487; background: #dff5e6; padding: 20px 8px 15px 7px; min-height: 0; }
.upper { flex: 1; display: flex; min-height: 0; }
.vsplit.inner { flex: none; width: 6px; }
.hsplit { height: 7px; background: #d9ebdf; display: grid; place-items: center; }
.hsplit i { width: 19px; height: 2px; background: repeating-linear-gradient(90deg, #93b3a2 0 2px, #f7fff9 2px 4px); }
.props { height: 190px; background: #cce9d7; border: 1px solid #bbd6c6; }
.props h2 { height: 24px; padding: 4px 2px; font: inherit; line-height: 18px; border-bottom: 1px solid #bbd6c6; }
.props th { height: 19px; line-height: 17px; padding: 0 2px; border: solid #bdd2c6; border-width: 1px 1px 1px 0; }
.props td { height: 19px; line-height: 16px; padding: 0 2px 2px; background: #dff5e6; border: solid #bdd2c6; border-width: 0 1px 1px 0; }
.props .hotrow td:last-child { background: #fddc82; border-right-width: 2px; border-bottom-width: 2px; }
.props .mid { padding: 0; }
.mid input { appearance: none; display: block; width: 13px; height: 13px; margin: 0 auto; border: 1px solid #888; border-radius: 2px; background: #f4faf6; position: relative; }
.mid input:checked::after { content: ""; position: absolute; left: 3px; top: 0; width: 5px; height: 9px; border: solid #2c4038; border-width: 0 2px 2px 0; transform: rotate(40deg); }

.ctx { position: absolute; z-index: 2; left: 85px; top: 47px; width: 132px; border: 3px solid #2f3e55; background: #fff; box-shadow: 2px 3px 3px #0006; }
.ctx button { width: 100%; height: 23px; justify-content: flex-start; padding: 2px 24px 0; border-bottom: 1px solid #a8b9b0; }
.ctx button:disabled { color: #8f9a95; }
.ctx .hot { height: 22px; background: #fddc82; border: 0; }
.winctl { position: absolute; right: 8px; top: 0; width: 106px; height: 30px; display: flex; gap: 3px; padding: 3px 0 0 22px; filter: drop-shadow(0 2px 2px #0005); }
.winctl .shape { position: absolute; inset: 0; width: 106px; height: 30px; }
.winctl button { position: relative; width: 16px; height: 16px; border: 1px solid #1a5a40; border-radius: 2px; background: #2c8562; }
.winctl button svg { width: 14px; height: 14px; }
.mark { position: absolute; right: 7px; bottom: 9px; font: 16px/18px "Liberation Sans", sans-serif; color: #ffffffb0; text-shadow: 1px 1px 1px #0002; }
```
